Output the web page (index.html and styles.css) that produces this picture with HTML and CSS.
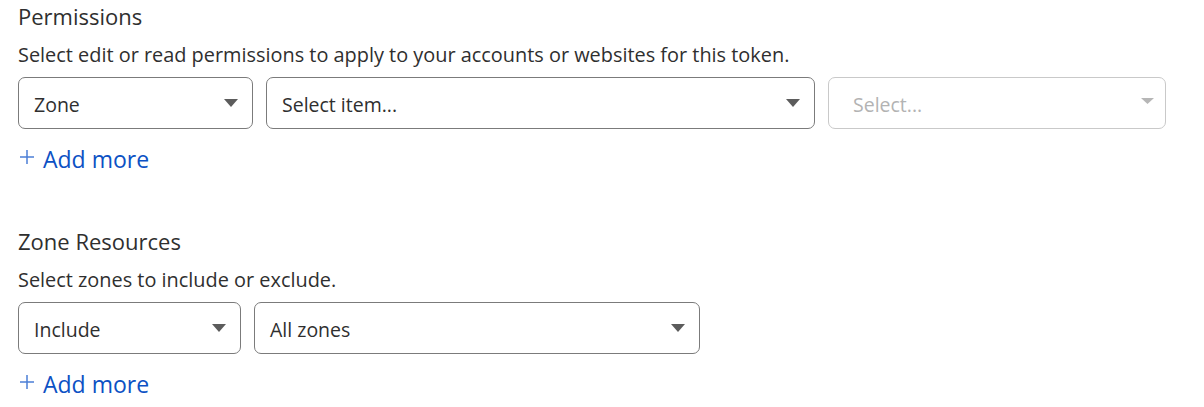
FILE: index.html
```html
<!DOCTYPE html>
<html lang="en">
<head>
<meta charset="utf-8">
<title>Token permissions</title>
<link rel="stylesheet" href="styles.css">
</head>
<body>
<main class="page">
  <section class="group">
    <h2 class="title">Permissions</h2>
    <p class="desc">Select edit or read permissions to apply to your accounts or websites for this token.</p>
    <div class="row">
      <div class="select w-235"><span class="value">Zone</span><svg class="caret" viewBox="0 0 14 8"><path d="M0 0H14L7 8Z"/></svg></div>
      <div class="select w-549"><span class="value">Select item...</span><svg class="caret" viewBox="0 0 14 8"><path d="M0 0H14L7 8Z"/></svg></div>
      <div class="select w-338 disabled"><span class="value">Select...</span><svg class="caret small" viewBox="0 0 13 6"><path d="M0 0H13L6.5 6Z"/></svg></div>
    </div>
    <a class="add" href="#"><svg class="plus" viewBox="0 0 14 14"><path d="M7 0V14M0 7H14"/></svg><span>Add more</span></a>
  </section>
  <section class="group second">
    <h2 class="title">Zone Resources</h2>
    <p class="desc">Select zones to include or exclude.</p>
    <div class="row">
      <div class="select w-223"><span class="value">Include</span><svg class="caret" viewBox="0 0 14 8"><path d="M0 0H14L7 8Z"/></svg></div>
      <div class="select w-446"><span class="value">All zones</span><svg class="caret" viewBox="0 0 14 8"><path d="M0 0H14L7 8Z"/></svg></div>
    </div>
    <a class="add" href="#"><svg class="plus" viewBox="0 0 14 14"><path d="M7 0V14M0 7H14"/></svg><span>Add more</span></a>
  </section>
</main>
</body>
</html>
```

FILE: styles.css
```css
html, body {
  margin: 0;
  padding: 0;
  background: #ffffff;
}

body {
  font-family: "Open Sans", "Noto Sans", sans-serif;
  color: #2f2f2f;
}

.page {
  padding: 0 18px;
}

.group {
  display: flex;
  flex-direction: column;
  align-items: flex-start;
}

.second {
  margin-top: 48px;
}

.title {
  margin: 0;
  font-size: 22px;
  font-weight: 400;
  line-height: 32px;
  color: #2f2f2f;
}

.desc {
  margin: 9px 0 8px;
  font-size: 19.9px;
  line-height: 28px;
}

.row {
  display: flex;
  gap: 13px;
}

.select {
  box-sizing: border-box;
  height: 52px;
  border: 1px solid #7b7b7b;
  border-radius: 7px;
  display: flex;
  align-items: center;
  justify-content: space-between;
  padding: 0 14px 0 15px;
  font-size: 19.5px;
  color: #2f2f2f;
  background: #fff;
}

.value {
  padding-top: 3px;
}

.w-235 { width: 235px; }
.w-549 { width: 549px; }
.w-338 { width: 338px; }
.w-223 { width: 223px; }
.w-446 { width: 446px; }

.caret {
  width: 14px;
  height: 8px;
  fill: #5c5c5c;
}

.disabled {
  border-color: #c9c9c9;
  color: #b3b3b3;
  padding: 0 11px 0 24px;
}

.disabled .caret {
  width: 13px;
  height: 6px;
  margin-bottom: 4px;
  fill: #b6b6b6;
}

.add {
  margin-top: 12px;
  display: flex;
  align-items: center;
  gap: 9px;
  font-size: 23px;
  line-height: 36px;
  color: #0c51c4;
  text-decoration: none;
}

.plus {
  width: 14px;
  height: 14px;
  margin: 0 0 4px 2px;
  stroke: #4c7fd6;
  stroke-width: 1.5;
  fill: none;
}
```
